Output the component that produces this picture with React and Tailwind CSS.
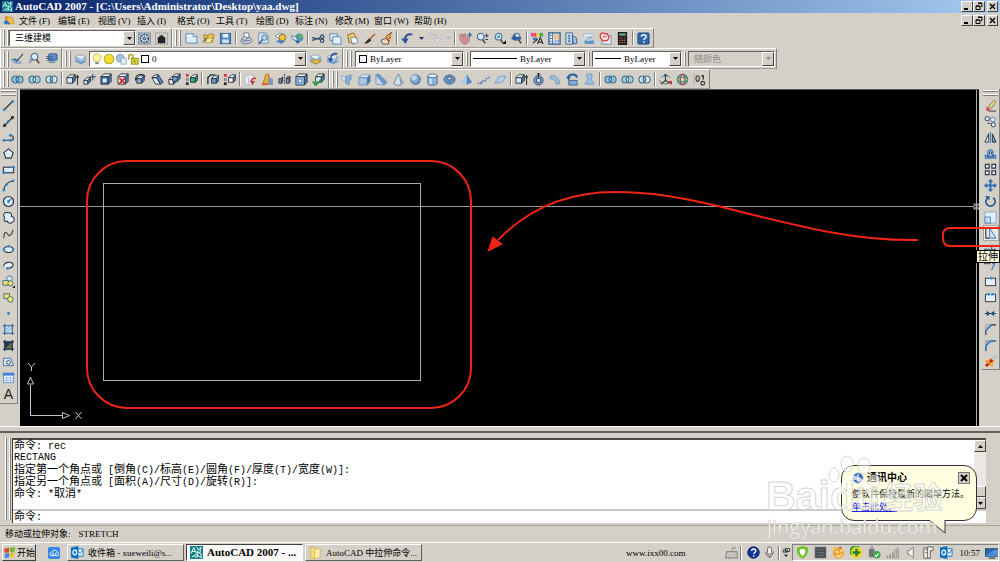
import React from 'react';

const BLUE = '#3a78b8';
const DARK = '#2b3440';

// solid box used by most of the 3D toolbar icons
const Cube = ({ front = '#8fb4dc', x = 2, y = 5, s = 7 }) => (
  <g stroke={DARK} strokeWidth="1" strokeLinejoin="round">
    <path d={`M${x} ${y}l3 -3h${s}l-3 3z`} fill="#eef5fc" />
    <path d={`M${x + s} ${y}l3 -3v${s}l-3 3z`} fill="#4b79ad" />
    <rect x={x} y={y} width={s} height={s} fill={front} />
  </g>
);

const Rings = ({ mid, side }) => (
  <g stroke="#3f7390" strokeWidth="1.2">
    <circle cx="4.7" cy="7" r="3.7" fill={side} />
    <circle cx="9.3" cy="7" r="3.7" fill={side} />
    <path d="M7 4.1a3.7 3.7 0 0 1 0 5.8a3.7 3.7 0 0 1 0 -5.8z" fill={mid} />
  </g>
);

const Sheets = () => (
  <g stroke="#5b86b4" strokeWidth=".6">
    <path d="M1 10l5-2 7 2-5 3z" fill="#7aa3cf" />
    <path d="M1 7.5l5-2 7 2-5 3z" fill="#b9d2ea" />
    <path d="M1 5l5-2 7 2-5 3z" fill="#e8f1fa" />
  </g>
);

const Lens = ({ x = 6, y = 5 }) => (
  <g>
    <path d={`M${x + 2} ${y + 3}l3 4`} stroke="#5d4a3a" strokeWidth="1.8" />
    <circle cx={x} cy={y} r="3.6" fill="#d6e9fa" stroke="#4d6f95" strokeWidth="1.2" />
  </g>
);

const Flag = () => (
  <g>
    <path d="M0 2l6-1v5l-5 1z" fill="#e1452f" />
    <path d="M7 1l6-1-1 6-5 0z" fill="#79b928" />
    <path d="M1 8l5-1v5l-5 1z" fill="#3f86e0" />
    <path d="M7 7h5l-1 5-4 0z" fill="#f6bf22" />
  </g>
);

const Outlook = () => (
  <g>
    <path d="M6 3h7v8H6z" fill="#eaf3fb" stroke="#0f78c8" />
    <path d="M6 4l4 4 3-4" fill="none" stroke="#0f78c8" />
    <path d="M0 1.5l8-1.5v14l-8-1.5z" fill="#0f70c0" />
    <ellipse cx="4" cy="7" rx="2" ry="2.6" fill="none" stroke="#fff" strokeWidth="1.3" />
  </g>
);

const Acad = () => (
  <g>
    <rect width="14" height="14" fill="#0e7f86" />
    <path d="M1 8l3-6 3 6M2 6h4M7 1l2 3 4-2M2 12l3-2 2 3M8 12V6l4 3v3M11 1v6M6 9l7 4" fill="none" stroke="#dff6f2" strokeWidth="1.1" />
  </g>
);

const ICONS = {
  acad: <Acad />,
  doc: (
    <g>
      <path d="M4 2l7 1 2 8-8-1z" fill="#f6c436" stroke="#a9781b" strokeWidth=".7" />
      <path d="M1 8c3-4 6-1 8 4H2z" fill="#3373c4" />
      <path d="M0 12h14" stroke="#e8e4c8" strokeWidth="2" />
      <path d="M2 1l4 3-3 2z" fill="#d8852c" />
    </g>
  ),
  gear: (
    <g>
      <rect x=".5" y="1" width="13" height="12" fill="#9db3c6" stroke="#6a8196" strokeDasharray="2 1" />
      <circle cx="7" cy="7" r="4.2" fill="#d9e4ee" stroke="#37495b" strokeWidth="1.6" strokeDasharray="2 1" />
      <circle cx="7" cy="7" r="1.6" fill="#6fa0cf" stroke="#37495b" />
    </g>
  ),
  home: (
    <g>
      <rect x=".5" y="1" width="13" height="12" fill="none" stroke="#6f7a85" strokeDasharray="1 1" />
      <path d="M2 7l5-4 5 4h-1v5H3V7z" fill="#20252b" />
    </g>
  ),
  new: (
    <g>
      <path d="M1 2h8l4 3v7H1z" fill="#d9eaf8" stroke="#5283b5" />
      <path d="M9 2v3h4" fill="#fff" stroke="#5283b5" />
      <path d="M2 4h5" stroke="#fff" strokeWidth="2" />
    </g>
  ),
  open: (
    <g>
      <path d="M2 3l5 1 1-2 5 1-2 8-8-2z" fill="#f0cf55" stroke="#8a6a17" strokeWidth=".8" />
      <path d="M6 7l6-1-3 6-6-1z" fill="#fbe99d" stroke="#8a6a17" strokeWidth=".6" />
      <path d="M1 11l5-6" stroke="#34404c" />
    </g>
  ),
  save: (
    <g>
      <rect x="1.5" y="1.5" width="11" height="11" fill="#4f8ac8" stroke="#2b5e99" />
      <rect x="4" y="2" width="6" height="4" fill="#eaf2fa" />
      <rect x="3.5" y="8" width="7" height="4" fill="#cfe1f2" />
    </g>
  ),
  print: (
    <g stroke="#5b6b86" strokeWidth=".9">
      <path d="M4 1h5l1 5H5z" fill="#fff" />
      <path d="M2 7l9-1 2 3-2 3-8 1-2-3z" fill="#c5cfe0" />
      <path d="M3 10l8-1" fill="none" />
      <circle cx="5" cy="7" r="2" fill="#dfe7f3" />
    </g>
  ),
  preview: (
    <g>
      <path d="M2 1h8l2 3v8H2z" fill="#e7f1fa" stroke="#5c88b7" />
      <circle cx="8" cy="6" r="3" fill="#b8d6f1" stroke="#3d6894" />
      <path d="M6 8l-4 5" stroke="#3d6894" strokeWidth="1.7" />
    </g>
  ),
  publish: (
    <g>
      <path d="M1 4l6-3 5 3-5 4z" fill="#e3edf7" stroke="#6a87a8" strokeWidth=".8" />
      <circle cx="9" cy="6" r="3.6" fill="#eec43e" stroke="#8a6a17" />
      <path d="M2 10l5-2 5 2-4 3z" fill="#5384bd" />
    </g>
  ),
  globe: (
    <g>
      <circle cx="9" cy="6" r="4.3" fill="#4a94d4" />
      <path d="M7 4l4-2 2 4-4 2z" fill="#67b04f" />
      <path d="M0 4l5 1 3 5-6-2z" fill="#dfe9f3" stroke="#4b6e92" strokeWidth=".8" />
      <path d="M4 9l6 1-3 3z" fill="#2d5f9e" />
    </g>
  ),
  cut: (
    <g fill="none" stroke="#33496a" strokeWidth="1.3">
      <path d="M0 6l9 2M0 9l9-3" />
      <circle cx="11" cy="5" r="1.8" />
      <circle cx="11" cy="9.5" r="1.8" />
    </g>
  ),
  copy: (
    <g fill="#e3effa" stroke="#4c84bb">
      <path d="M1 2h8v7H1z" />
      <path d="M4 5h7l2 2v6H4z" />
    </g>
  ),
  paste: (
    <g>
      <path d="M2 3l6-2 4 6-3 6-6-2z" fill="#e6c865" stroke="#8b6d22" />
      <path d="M5 6h6l2 5-6 2z" fill="#f3f7fb" stroke="#5a83ad" strokeWidth=".8" />
    </g>
  ),
  brush: (
    <g>
      <path d="M13 2L7 8" stroke="#b5793b" strokeWidth="2" />
      <path d="M7 7l2 2c-2 3-5 4-8 3 3-1 3-4 6-5z" fill="#3a2f28" />
    </g>
  ),
  bolt: (
    <g>
      <path d="M13 0L6 5l2 1-5 5 9-5-2-1z" fill="#f6bb28" stroke="#8a3d10" strokeWidth=".8" />
      <path d="M1 9l5-2 4 2-1 4-6 0z" fill="#e6d9c8" stroke="#5a4636" strokeWidth=".9" />
      <path d="M8 8l2 2" stroke="#d2402a" strokeWidth="2" />
    </g>
  ),
  undo: (
    <g>
      <path d="M12 3C8 1 4 4 4 9" fill="none" stroke="#2c5490" strokeWidth="2.2" />
      <path d="M0 7h8l-3 6z" fill="#2c5490" />
    </g>
  ),
  redo: (
    <g>
      <path d="M2 3c4-2 8 1 8 6" fill="none" stroke="#bcc2c8" strokeWidth="2" />
      <path d="M6 7h8l-4 6z" fill="#d8dde2" stroke="#b2b8be" strokeWidth=".7" />
    </g>
  ),
  pan: (
    <g>
      <path d="M1 3l2-1 2 3V2h2l1 4 3-1 0 5-3 3H5L1 9z" fill="#cf8f92" stroke="#a56a70" strokeWidth=".7" />
      <path d="M9 3h5M11.500 .500v5" stroke="#3a6898" strokeWidth="1.4" />
    </g>
  ),
  zoomrt: (<g><Lens x={5} y={5} /><path d="M9.500 4h4M11.500 2v4M10 8h3" stroke="#25405e" strokeWidth="1.1" /></g>),
  zoomwin: (<g><Lens x={6} y={5} /><rect x="4.500" y="3.500" width="3" height="3" fill="#5d93c9" /><path d="M10 13h4V9z" fill="#111" /></g>),
  zoomprev: (<g><Lens x={7} y={5} /><path d="M1 7l5-5v3h6v3H6v2z" fill="#2f5f98" /></g>),
  props: (
    <g>
      <path d="M0 1h3v4H0z" fill="#e242c9" /><path d="M3 1h3v4H3z" fill="#f04a3a" /><path d="M6 1h3v4H6z" fill="#f5d731" /><path d="M9 1h4v4H9z" fill="#35b54a" />
      <path d="M2 6h5v3H2z" fill="#4d78b1" />
      <path d="M7 13l3-7 3 7M8 11h4M2 12l5-4" stroke="#222" fill="none" strokeWidth="1.1" />
    </g>
  ),
  center: (
    <g>
      <rect x="1" y="1" width="12" height="12" fill="#e8f1fa" stroke="#315d90" strokeWidth="1.4" />
      <path d="M5 1v12" stroke="#315d90" />
      <path d="M7 3h2v2H7zM10 3h2v2h-2zM7 6h2v2H7zM10 6h2v2h-2z" fill="#e09b32" />
      <path d="M2 4h2M2 7h2M2 10h2" stroke="#315d90" />
      <path d="M7 9h2v2H7zM10 9h2v2h-2z" fill="#5b8ec6" />
    </g>
  ),
  palette: (
    <g>
      <path d="M1 1h7v12H1z" fill="#e1edf8" stroke="#315d90" />
      <path d="M3 3h3v2H3zM3 6h3v2H3zM3 9h3v2H3z" fill="#4a7fba" />
      <path d="M8 4l4 2 1 6-4 1z" fill="#a9c6e4" stroke="#315d90" />
    </g>
  ),
  sheet: (
    <g>
      <path d="M1 2h11l1 3-11 1z" fill="#dce9f5" stroke="#89a7c6" strokeWidth=".6" />
      <path d="M2 7l10-2-8 5 9-1v4H3z" fill="#5f9bc8" />
      <path d="M1 5l8 2-8 3z" fill="#c7d9ea" />
    </g>
  ),
  markup: (
    <g>
      <rect x="3" y="4" width="10" height="9" fill="#e9eff6" stroke="#7790ad" />
      <path d="M2 2q2-2 4 0q3-1 3 1q3 2 1 4q0 3-3 2q-3 2-4-1q-3-2-1-6z" fill="#fbe4e4" stroke="#d8343a" strokeWidth="1.300" />
      <path d="M4 5h4" stroke="#d8343a" />
    </g>
  ),
  calc: (
    <g>
      <rect x="2" y="0" width="10" height="14" fill="#1d1d1f" />
      <rect x="3.500" y="1.500" width="7" height="2.500" fill="#63b27b" />
      <path d="M3.500 6.500h7M3.500 9h7M3.500 11.500h7" stroke="#bf5c51" strokeWidth="1.200" strokeDasharray="1.500 1" />
    </g>
  ),
  help: (
    <g>
      <rect x="1" y="1" width="12" height="12" rx="1" fill="#2d66a8" stroke="#1b4478" />
      <path d="M4.800 5.200c0-3 5-3 5 0c0 1.800-2.500 1.600-2.500 3.500M7.300 10v1.600" stroke="#fff" fill="none" strokeWidth="1.500" />
    </g>
  ),
  lay1: (<g><path d="M0 8l7 0 4 4H4z" fill="#a6c6e6" stroke="#4f7fb0" strokeWidth=".7" /><path d="M13 2L6 10l-3-3" stroke="#2f567f" fill="none" strokeWidth="1.300" /></g>),
  lay2: (<g><Lens x={7} y={5} /><path d="M1 12l5-4M1 9l4-2" stroke="#6d87a5" strokeWidth="1.200" /></g>),
  lay3: (<g><rect x="4" y="2" width="9" height="7" rx="1" fill="#5d8ec4" stroke="#315d90" /><path d="M1 5h7M1 7h7M2 9h7M4 11h7" stroke="#2e5f94" /></g>),
  layers: <Sheets />,
  layprev: (<g><Sheets /><path d="M4 8l9 1-4 4-6-2z" fill="#e8bb3c" stroke="#9a7420" strokeWidth=".700" /></g>),
  layundo: (<g><Sheets /><path d="M12 2C7 1 5 4 5 8" fill="none" stroke="#2c5490" strokeWidth="1.800" /><path d="M2 7h6l-3 4z" fill="#2c5490" /></g>),
  bulb: (<g><path d="M4 9C1 5 3 1 7 1s6 4 3 8v1H4z" fill="#fdf6a3" stroke="#b9a533" strokeWidth=".8" /><path d="M5 11h4v2H5z" fill="#5b7fa8" /></g>),
  sun: <circle cx="7" cy="7" r="5.500" fill="#f4e02c" stroke="#b4a51b" strokeWidth="1.200" />,
  freeze: (<g><circle cx="6" cy="6" r="4.500" fill="#a8c3dd" stroke="#7796b4" /><rect x="7" y="6" width="6" height="7" fill="#e8eff6" stroke="#8da3ba" /></g>),
  lock: (<g><path d="M2 8V4c0-3 5-3 5 0v3" fill="none" stroke="#a99a20" strokeWidth="1.600" /><rect x="5" y="6" width="8" height="7" fill="#d9d23b" stroke="#8c8218" /><path d="M9 8v3" stroke="#6a6210" /></g>),
  union: <Rings mid="#8fc3da" side="#8fc3da" />,
  subtract: <Rings mid="#f0f4f6" side="#a9cddd" />,
  intersect: <Rings mid="#8fc3da" side="#e2e6e6" />,
  extrude: (<g><Cube x={1} y={5} s={6} front="#dbe7f2" /><path d="M12.500 13V4" stroke="#222" /><path d="M10.500 5l2-3.500 1.500 3.500z" fill="#222" /></g>),
  movef: (<g><Cube x={1} y={8} s={4} front="#dbe7f2" /><path d="M7 4h7M10.500 1v7" stroke="#2f4f7a" strokeWidth="1.200" /></g>),
  offsetf: (<g><Cube x={1} y={4} s={8} front="#3f74b4" /><rect x="3" y="6" width="4" height="4" fill="#e8f1fa" /></g>),
  deletef: (<g><Cube x={1} y={4} s={8} front="#f0f3f6" /><path d="M2.500 5.500l6 6M8.500 5.500l-6 6" stroke="#d3242b" strokeWidth="1.800" /></g>),
  rotatef: (<g><Cube x={3} y={6} s={5} front="#89aed6" /><path d="M2 6c0-5 8-6 10-2" fill="none" stroke={DARK} strokeWidth="1.200" /><path d="M1 5l3 1-3 3z" fill={DARK} /></g>),
  taper: (<g stroke={DARK}><path d="M1 5l3-3h4l-2 3zM1 5h5l4 7H5z" fill="#dfe9f3" /><path d="M8 2l5 8-3 2-4-7z" fill="#5c87b8" /></g>),
  copyf: (<g><Cube x={1} y={7} s={5} front="#dbe7f2" /><Cube x={5} y={4} s={5} front="#6f9ccb" /></g>),
  colorf: (<g><Cube x={6} y={5} s={5} front="#35b566" /><path d="M1 1h3v3H1z" fill="#d8343a" /><path d="M1 5.500h3v3H1z" fill="#888" /><path d="M1 10h3v3H1z" fill="#333" /></g>),
  copye: (<g><Cube x={6} y={6} s={5} front="#6f9ccb" /><path d="M2 12V5l3-3h5" fill="none" stroke={DARK} strokeWidth="1.500" /></g>),
  colore: (<g><Cube x={6} y={5} s={5} front="#f1f3f5" /><path d="M1 1h3v3H1z" fill="#d8343a" /><path d="M1 5.500h3v3H1z" fill="#888" /><path d="M1 10h3v3H1z" fill="#333" /></g>),
  imprint: (<g><path d="M1 4l4-2 5 1v8l-5 2-4-2z" fill="#e6edf5" stroke="#a9bacb" strokeWidth=".8" /><path d="M5 5v8" stroke="#a9bacb" /><path d="M13 6c-3-1-5 0-5 3" fill="none" stroke="#c9343a" strokeWidth="1.5" /><path d="M6 8l3 5 3-4z" fill="#c9343a" /></g>),
  clean: (<g><path d="M5 2l3-1 4 11H2z" fill="#efa93a" stroke="#a0661c" strokeWidth=".8" /><path d="M8 4l5 3v6H7z" fill="#8a97a6" /><path d="M1 12h6" stroke="#d85b28" strokeWidth="2" /></g>),
  separate: (<g fill="#7d9cc0" stroke={DARK}><path d="M1 6h3v5H1zM4 6l1-2v5l-1 2M9 6h3v5H9zM9 6l1-2h3l-1 2M13 4v5l-1 2" /><path d="M7 1v12" strokeDasharray="2 1" /></g>),
  shell: (<g><Cube x={1} y={4} s={9} front="#a9c9e8" /><rect x="3.500" y="6.500" width="4" height="4" fill="#eef5fb" stroke={BLUE} /></g>),
  check: (<g><Cube x={4} y={4} s={6} front="#dfeaf5" /><path d="M1 9l3 4 6-6" fill="none" stroke="#239a3f" strokeWidth="2" /></g>),
  polysolid: (<g stroke="#6e95c0" strokeWidth=".7"><path d="M1 3l4 1v5L1 7z" fill="#dcebf8" /><path d="M5 4l6-2v5l-2 1v5l-4-2z" fill="#86add8" /></g>),
  box: (<g stroke="#5580ad" strokeWidth=".7"><path d="M1 5l4-3h8l-3 3z" fill="#e3effa" /><path d="M1 5h9v8H1z" fill="#a7c5e5" /><path d="M10 5l3-3v7l-3 4z" fill="#4773a6" /></g>),
  wedge: (<g stroke="#5580ad" strokeWidth=".7"><path d="M1 2l3-1 9 9-3 3z" fill="#7299c5" /><path d="M1 2v10l9 1z" fill="#c3d9ee" /></g>),
  cone: (<g><path d="M7 1l5 10c-1 3-9 3-10 0z" fill="#d3e1ef" stroke="#6a7f96" /><path d="M8 4l3 7-2 1z" fill="#7f9bb8" /></g>),
  sphere: (<g><circle cx="7" cy="7" r="5.800" fill="#5f86b6" /><circle cx="6.3" cy="6.2" r="4.600" fill="#86a8d0" /><circle cx="5.500" cy="5.200" r="2.800" fill="#c3d7ec" /></g>),
  cylinder: (<g stroke="#4d6f95"><path d="M2 3v8c0 3 10 3 10 0V3z" fill="#8eb2d9" /><ellipse cx="7" cy="3" rx="5" ry="2" fill="#eaf2fa" /><path d="M5 6v6" stroke="#dce9f6" strokeWidth="2" /></g>),
  torus: (<g><ellipse cx="7" cy="7" rx="6" ry="5" fill="#6690c0" stroke="#456b98" /><ellipse cx="7" cy="6" rx="2.600" ry="1.600" fill="#d9d6cf" stroke="#39597f" /></g>),
  pyramid: (<g><path d="M7 1l6 9-6 3z" fill="#5486be" /><path d="M7 1L1 10l6 3z" fill="#a9cbec" /></g>),
  helix: <path d="M1 12c2-5 4 3 4-2s4 2 4-2 4 0 4-4" fill="none" stroke="#5e84ad" strokeWidth="1.600" strokeDasharray="2 1" />,
  plane: <path d="M1 11l4-7 8-1-4 7z" fill="#b4d0eb" stroke="#7a9fc6" />,
  presspull: (<g><circle cx="7" cy="8" r="5" fill="#7a9cc0" stroke="#385474" /><rect x="5" y="6" width="4" height="4" fill="#dfeaf5" stroke="#385474" /><path d="M7 0v5M5 2l2-2 2 2" stroke="#222" fill="none" /></g>),
  sweep: <path d="M2 3c5-1 8 2 10 8l-4 1C7 8 5 6 1 6z" fill="#9dbfe2" stroke="#6c91b8" />,
  revolve: (<g><path d="M3 8h9v5H3z" fill="#86add8" stroke="#44698f" /><path d="M2 5c2-5 9-4 10 0" fill="none" stroke="#2d5f9e" strokeWidth="2" /><path d="M0 4h5l-2 4z" fill="#2d5f9e" /></g>),
  loft: <path d="M4 1h6L9 7l3 5H2l3-5z" fill="#9dbfe2" stroke="#7a9fc6" />,
  ucs: (<g fill="none"><path d="M7 2v6l-5 4M7 8l5 3" stroke="#333" strokeWidth="1.200" /><path d="M2 5c2-3 8-3 10 0M1 8c0 5 12 5 12 0" stroke="#45715c" /><circle cx="7" cy="2.500" r="1.500" fill="#1f4f9c" /><path d="M10 9h4v4z" fill="#d1262c" /></g>),
  orbit: (<g fill="none"><circle cx="7" cy="7" r="5.500" stroke="#2f6ea5" strokeWidth="1.200" /><ellipse cx="7" cy="7" rx="2.500" ry="5.500" stroke="#c4333a" strokeWidth="1.300" /><ellipse cx="7" cy="7" rx="5.500" ry="2.500" stroke="#3a9a58" strokeWidth="1.300" /></g>),
  walk: (<g fill="none" stroke="#333"><path d="M3 1L1 3v10" stroke="#aaa" /><ellipse cx="5" cy="6" rx="1.800" ry="3" strokeWidth="1.200" /><circle cx="10.500" cy="11" r="2" strokeWidth="1.200" /><path d="M9 3h2v4" strokeWidth="1.500" /></g>),
  // draw
  line: (<g><path d="M3 11L11 3" stroke={DARK} strokeWidth="1.300" /><circle cx="2.500" cy="11.500" r="1.500" fill="#2783d8" /><circle cx="11.500" cy="2.500" r="1.500" fill="#2783d8" /></g>),
  xline: (<g><path d="M2 12L12 2" stroke="#222" strokeWidth="1.300" /><path d="M1 13l1-4 3 3zM13 1l-1 4-3-3z" fill="#222" /><circle cx="7" cy="7" r="1.500" fill="#2783d8" /></g>),
  pline: (<g><path d="M2 10h8c3 0 3-5 0-5H8" fill="none" stroke={DARK} strokeWidth="1.200" /><circle cx="2" cy="10" r="1.500" fill="#2783d8" /><circle cx="9" cy="10" r="1.500" fill="#2783d8" /><circle cx="9" cy="4.500" r="1.500" fill="#2783d8" /></g>),
  polygon: <path d="M7 2l5 4-2 6H4L2 6z" fill="#dcebf8" stroke={DARK} strokeWidth="1.200" />,
  rect: (<g><rect x="1.500" y="4.500" width="11" height="6" fill="#dcebf8" stroke={DARK} strokeWidth="1.200" /><circle cx="1.800" cy="10.500" r="1.500" fill="#2783d8" /><circle cx="12.200" cy="4.500" r="1.500" fill="#2783d8" /></g>),
  arc: (<g><path d="M2 12C2 7 6 3 12 2" fill="none" stroke={DARK} strokeWidth="1.100" /><circle cx="2" cy="12" r="1.400" fill="#2783d8" /><circle cx="5" cy="6" r="1.400" fill="#2783d8" /><circle cx="12" cy="2" r="1.400" fill="#2783d8" /></g>),
  circle: (<g><circle cx="7" cy="7" r="5.400" fill="#e3effa" stroke={DARK} strokeWidth="1.300" /><path d="M7 7l3-3" stroke="#2783d8" strokeWidth="1.400" /><circle cx="7" cy="7" r="1.600" fill="#2783d8" /></g>),
  cloud: <path d="M3 7C0 4 3 0 6 2c3-1 5 1 4 4 4 0 4 5 1 6-2 2-5 1-5-1C3 12 1 9 3 7z" fill="#e3effa" stroke={DARK} strokeWidth="1.100" />,
  spline: <path d="M2 12C2 2 6 7 7 9s4-2 5-6" fill="none" stroke="#444" strokeWidth="1.200" />,
  ellipse: (<g><ellipse cx="7" cy="7" rx="5" ry="3.300" fill="#e3effa" stroke={DARK} strokeWidth="1.200" /><circle cx="2" cy="7" r="1.400" fill="#2783d8" /><circle cx="12" cy="7" r="1.400" fill="#2783d8" /><circle cx="7" cy="3.500" r="1.400" fill="#2783d8" /></g>),
  earc: (<g><path d="M2 8C1 3 11 2 12 6c0 3-3 4-6 4" fill="#e3effa" stroke={DARK} strokeWidth="1.200" /><circle cx="6" cy="10" r="1.500" fill="#2783d8" /></g>),
  insert: (<g><circle cx="8" cy="4" r="3" fill="#d9e8f6" stroke={BLUE} /><path d="M1 6h6v5H1z" fill="#f1e56d" stroke="#3a6d8c" /><circle cx="9" cy="9" r="2.800" fill="#f1e56d" stroke="#3a6d8c" /><path d="M11 14h3v-3z" fill="#111" /></g>),
  block: (<g><path d="M2 3h6v5H2z" fill="#f1e56d" stroke="#3a6d8c" /><circle cx="9" cy="9" r="3" fill="#f1e56d" stroke="#3a6d8c" /></g>),
  point: <circle cx="7" cy="7" r="1.600" fill="#2783d8" />,
  hatch: (<g><rect x="3" y="3" width="8" height="8" fill="#cfe1f3" /><path d="M1 3h12M1 11h12M3 1v12M11 1v12" stroke="#2c6295" strokeWidth="1.200" /><path d="M4 8l4-4M5 10l5-5" stroke="#6f9ccb" /></g>),
  gradient: (<g><rect x="3" y="3" width="8" height="8" fill="#2b3b52" /><path d="M11 3v8H3z" fill="#6b7347" /><path d="M1 3h12M1 11h12M3 1v12M11 1v12" stroke="#1d3350" strokeWidth="1.300" /></g>),
  region: (<g><path d="M1.500 3.500h8l3 8h-11z" fill="#d5e6f5" stroke="#3f74a8" /><circle cx="7" cy="8" r="2" fill="#fff" stroke={DARK} /></g>),
  table: (<g><rect x="1.500" y="2.500" width="11" height="10" fill="#fff" stroke="#5d93d6" /><path d="M1 2h12v3H1z" fill="#3f7fd6" /><path d="M2 7.500h10M2 10h10M5 5v7M9 5v7" stroke="#8eb6ea" /></g>),
  // modify
  erase: (<g><path d="M5 8l6-7 2 2-5 7z" fill="#f1d87a" stroke="#555" strokeWidth=".7" /><path d="M3 8l4 3-2 2-3-1z" fill="#dd4b41" /><path d="M5 13h8" stroke="#333" /></g>),
  copym: (<g fill="#e3effa" stroke={DARK}><circle cx="3.500" cy="4" r="2.300" /><circle cx="9.500" cy="5" r="2.500" stroke={BLUE} /><circle cx="10" cy="10.500" r="2.300" /><path d="M4 9h3" /></g>),
  mirror: (<g><path d="M5 3v9H1z" fill="#e3effa" stroke={DARK} /><path d="M9 3v9h4z" fill="#6f9ccb" stroke={DARK} /><path d="M7 1v12" stroke={BLUE} /></g>),
  offset: (<g><path d="M1.500 12V9H5C1 1 13 1 9 9h3.500v3z" fill="#a9cbec" stroke={BLUE} strokeWidth="1.400" /><path d="M3 10.500h8M6 8c-1-4 3-4 2 0" fill="none" stroke={DARK} /></g>),
  array: <path d="M1.500 1.500h4v4h-4zM8.500 1.500h4v4h-4zM1.500 8.500h4v4h-4zM8.500 8.500h4v4h-4z" fill="#e3effa" stroke={DARK} strokeWidth="1.200" />,
  move: <path d="M7 0l3 3H8v3h3V4l3 3-3 3V8H8v3h2l-3 3-3-3h2V8H3v2L0 7l3-3v2h3V3H4z" fill="#2f6cb0" />,
  rotate: (<g><path d="M4 3a5 5 0 1 0 6 0" fill="none" stroke="#2c5f97" strokeWidth="1.900" /><path d="M1 1h5v5z" fill="#2c5f97" /></g>),
  scale: (<g><rect x="1" y="1" width="12" height="12" fill="#e3effa" stroke="#87a9cc" /><rect x="1" y="6.500" width="6" height="6.500" fill="#c5dbf0" stroke="#5b87b5" /></g>),
  stretch: (<g><path d="M6 1H2v11h4" fill="none" stroke={DARK} strokeWidth="1.200" /><path d="M6 1l7 11H6z" fill="#cfe1f3" stroke={BLUE} /></g>),
  trim: <path d="M0 7h6M8 7h5M9 2L6 12" stroke="#4b6e92" strokeWidth="1.400" />,
  extend: (<g><path d="M0 5h7M9 5h2" stroke="#666" strokeWidth="1.200" /><path d="M13 2L8 12" stroke={BLUE} strokeWidth="1.200" /></g>),
  breakp: (<g><rect x="1.500" y="3.500" width="11" height="8" fill="#e3effa" stroke={DARK} /><circle cx="8" cy="3.500" r="1.400" fill="#2783d8" /></g>),
  break: (<g><path d="M5 3.500H1.500v8h11v-8H9" fill="#e3effa" stroke={DARK} /><circle cx="5" cy="3.500" r="1.400" fill="#2783d8" /><circle cx="9" cy="3.500" r="1.400" fill="#2783d8" /></g>),
  join: (<g><path d="M1 7h12" stroke="#333" /><path d="M3 4l4 3-4 3zM11 4L7 7l4 3z" fill="#1d4c7c" /></g>),
  chamfer: (<g fill="none"><path d="M2 13V8l6-6h5" stroke={DARK} strokeWidth="1.200" /><path d="M2 8l6-6" stroke="#2783d8" strokeWidth="1.600" /><path d="M2 7V2h5" stroke="#999" /></g>),
  fillet: (<g fill="none"><path d="M2 13V2h11" stroke="#888" /><path d="M2 13V11c0-6 4-9 9-9h2" stroke={DARK} /><path d="M2 11c0-6 4-9 9-9" stroke="#2783d8" strokeWidth="1.700" /></g>),
  explode: (<g><path d="M1 6l4 0 1-3 3 3 3 0-3 3 1 4-4-2-4 2 1-4z" fill="#ef8a2a" /><path d="M2 12l7-7" stroke="#c3211b" strokeWidth="2.400" /><path d="M4 7l2 2M7 9l2 2" stroke="#f6d13a" strokeWidth="1.800" /><path d="M10 1l3 3M12 1l1 1M8 2l1 1" stroke="#7ea7d3" /></g>),
  // taskbar
  flag: <Flag />,
  cloudapp: (<g><rect width="14" height="14" rx="2" fill="#3288e6" /><path d="M3 10c-2-3 1-4 2-4 1-4 6-2 5 0 3 0 3 4 1 4z" fill="none" stroke="#fff" strokeWidth="1.100" /><circle cx="6" cy="8" r="1" fill="#fff" /><circle cx="9" cy="8" r="1" fill="#fff" /></g>),
  outlook: <Outlook />,
  folder: (<g><path d="M2 1l5 1v11l-5 1z" fill="#f5dc7c" stroke="#cfa63b" strokeWidth=".7" /><path d="M6 4l6-2v10l-6 2z" fill="#fbeeb0" stroke="#cfa63b" strokeWidth=".7" /></g>),
  keyboard: (<g><path d="M8 5V2h4" stroke="#888" fill="none" /><path d="M2 6h11l1 7H0z" fill="#b9b6af" stroke="#85827c" /><path d="M3 8h8M2 10.500h10" stroke="#eceae5" strokeDasharray="1.500 1" /></g>),
  qmark: (<g><circle cx="7" cy="7" r="6.200" fill="#15349b" stroke="#0b1f66" /><path d="M5 5.500c0-3 4.500-3 4.500 0C9.500 7 7.300 7 7.300 8.500M7.300 10v1.500" stroke="#fff" fill="none" strokeWidth="1.400" /></g>),
  mic: (<g fill="none" stroke="#555"><rect x="5" y="1" width="4" height="8" rx="2" fill="#fff" /><path d="M3 6c0 7 8 7 8 0M7 11v2" /></g>),
  restore: (<g><path d="M6 1.500h6v4H6zM3 3.500h6v3H3z" fill="#eee" stroke="#222" strokeWidth="1.200" /><path d="M4 10h6l-3 3z" fill="#111" /></g>),
  shield: (<g><path d="M7 0l6 2c0 6-1 9-6 12C2 11 1 8 1 2z" fill="#6fc02c" /><path d="M7 3l3 1c0 4-1 5-3 7-2-2-3-3-3-7z" fill="#fff" /></g>),
  chip: (<g><rect x="1" y="1" width="12" height="12" fill="#4a4f54" stroke="#85898d" strokeDasharray="1 1" /><path d="M3 4h8M3 7h8M3 10h8" stroke="#6f757b" /></g>),
  pal: (<g><circle cx="7" cy="7.500" r="6" fill="#f4a436" /><path d="M4 6l3 1M9 4l2 2M5 10c2 2 4 1 5-1" fill="none" stroke="#fde6b0" strokeWidth="1.800" /><circle cx="3" cy="3" r="1.800" fill="#e9c22c" /><circle cx="9" cy="2" r="1.500" fill="#d65e43" /></g>),
  plus: (<g><circle cx="7" cy="7" r="6.500" fill="#f0d52c" /><path d="M1 9a6.500 6.500 0 0 1 9-8.500" fill="none" stroke="#2c9c38" strokeWidth="2" /><path d="M7 3v8M3 7h8" stroke="#237e2c" strokeWidth="2.600" /></g>),
  usb: (<g><rect x="1" y="3" width="6" height="9" rx="1" fill="#6d7278" /><path d="M2 0h4v3H2z" fill="#a5a9ad" /><circle cx="9.500" cy="9.500" r="4" fill="#39a844" /><path d="M7.500 9.500l1.500 2 2.500-3.500" fill="none" stroke="#fff" strokeWidth="1.200" /></g>),
  signal: <path d="M1 11h1v2H1zM4 9h1v4H4zM7 7h1v6H7zM9.500 4h1.500v9H9.500zM12 2h1.500v11H12z" fill="#eee" stroke="#7c7a76" strokeWidth=".7" />,
  speaker: <path d="M4 5h2l4-4v12L6 9H4z" fill="#f6f5f2" stroke="#7c7a76" />,
  clip: (<g fill="#efeeea" stroke="#66645f"><rect x="2" y="2" width="6" height="11" /><path d="M6 1h6v4H9v8H6z" /><path d="M4 4h2M4 7h2" /></g>),
  display: (<g><path d="M0 3h14v8H0z" fill="#2b67b0" stroke="#173f74" /><path d="M0 11L10 4h4v7z" fill="#4f8ed6" /><path d="M4 13h7" stroke="#555" strokeWidth="1.500" /></g>),
  info: (<g><circle cx="7" cy="7" r="6.200" fill="#3665b8" stroke="#cfdaf0" /><path d="M7 3v2M7 6v5" stroke="#fff" strokeWidth="2" /></g>),
};

const Icon = ({ name, size = 'w-[13px] h-[13px]' }) => (
  <svg viewBox="0 0 14 14" className={`${size} shrink-0`} aria-hidden="true">{ICONS[name]}</svg>
);

const Grip = () => (
  <span className="flex gap-[2px] w-[6px] h-[16px] shrink-0">
    <span className="w-[2px] bg-white border-r border-[#808080]" />
    <span className="w-[2px] bg-white border-r border-[#808080]" />
  </span>
);

const Sep = () => <span className="w-[2px] h-[14px] mx-px shrink-0 bg-white border-l border-[#808080]" />;

const Tools = ({ names }) => names.split(' ').map((n, i) => {
  if (n === '|') return <Sep key={i} />;
  if (n === 'v' || n === 'w') {
    return (
      <button key={i} aria-label="more" className="w-[10px] h-4 flex items-center justify-center">
        <svg viewBox="0 0 5 3" className="w-[5px] h-[3px]"><path d="M0 0h5L2.500 3z" fill={n === 'v' ? '#21307a' : '#b4b8c0'} /></svg>
      </button>
    );
  }
  return (
    <button key={i} aria-label={n} className="w-[17px] h-4 shrink-0 flex items-center justify-center"><Icon name={n} /></button>
  );
});

const Panel = ({ children }) => (
  <div className="flex items-center pl-[2px] pr-px border-t border-l border-t-white border-l-white border-r border-b border-r-[#808080] border-b-[#a09d96]">
    {children}
  </div>
);

const raised = 'bg-[#d4d0c8] border border-t-white border-l-white border-r-[#404040] border-b-[#404040]';

const Arrow = ({ color = '#000', up }) => (
  <svg viewBox="0 0 5 3" className="w-[5px] h-[3px]"><path d={up ? 'M0 3h5L2.500 0z' : 'M0 0h5L2.500 3z'} fill={color} /></svg>
);

const Drop = ({ label, value, width, children, disabled, pad = 'pl-[5px]' }) => (
  <div className={`${width} h-[16px] flex items-stretch border border-t-[#606060] border-l-[#606060] border-r-white border-b-white text-[9px] ${disabled ? 'bg-[#d4d0c8] text-[#8c8984]' : 'bg-white text-black'}`}>
    <div className={`flex flex-1 min-w-0 items-center ${pad}`}>
      {children}
      <select aria-label={label} disabled={disabled} className="appearance-none bg-transparent flex-1 min-w-0 leading-[14px] outline-none">
        <option>{value}</option>
      </select>
    </div>
    <span className={`${raised} w-[12px] flex items-center justify-center`}><Arrow color={disabled ? '#8c8984' : '#000'} /></span>
  </div>
);

const Divider = () => <span className="w-[2px] h-[14px] mx-[2px] shrink-0 bg-white border-r border-[#808080]" />;

const WinButtons = () => (
  <div className="flex ml-auto mr-[2px]">
    <button aria-label="Minimize" className={`${raised} w-[12px] h-[11px]`}><svg viewBox="0 0 10 9"><path d="M2 6h4v2H2z" /></svg></button>
    <button aria-label="Restore" className={`${raised} w-[12px] h-[11px] mr-[2px]`}>
      <svg viewBox="0 0 10 9"><path d="M4 1.500h4v3H7M2 4h4v3.500H2zM4 1h4M2 4h4" fill="none" stroke="#000" /></svg>
    </button>
    <button aria-label="Close" className={`${raised} w-[11px] h-[11px]`}><svg viewBox="0 0 9 9"><path d="M2 2l5 5M7 2L2 7" stroke="#000" strokeWidth="1.400" /></svg></button>
  </div>
);

const MENU = [
  ['文件', 'F'], ['编辑', 'E'], ['视图', 'V'], ['插入', 'I'], ['格式', 'O'], ['工具', 'T'],
  ['绘图', 'D'], ['标注', 'N'], ['修改', 'M'], ['窗口', 'W'], ['帮助', 'H'],
];

const DRAW = 'line xline pline polygon rect arc circle cloud spline ellipse earc insert block point hatch gradient region table'.split(' ');
const MODIFY = 'erase copym mirror offset array move rotate scale stretch trim extend breakp break join chamfer fillet explode'.split(' ');

const LOG = [
  '命令: rec',
  'RECTANG',
  '指定第一个角点或 [倒角(C)/标高(E)/圆角(F)/厚度(T)/宽度(W)]:',
  '指定另一个角点或 [面积(A)/尺寸(D)/旋转(R)]:',
  '命令: *取消*',
];

// Chinese runs are set a little larger than the latin ones
const Mixed = ({ text }) => text.split(/([\u4e00-\u9fff]+)/).map((part, i) => (
  i % 2 ? <span key={i} className="text-[11px]">{part}</span> : part
));

const VGrip = () => (
  <span className="flex flex-col gap-[2px] w-[15px] mt-px mb-px">
    <span className="h-[2px] bg-white border-b border-[#808080]" />
    <span className="h-[2px] bg-white border-b border-[#808080]" />
  </span>
);

const SideBar = ({ names, text }) => (
  <div className="self-start w-[18px] flex flex-col items-center bg-[#d4d0c8] border-r border-b border-[#808080]">
    <VGrip />
    {names.map((n) => (
      <button key={n} aria-label={n} className={`w-4 h-4 flex items-center justify-center ${n === 'stretch' ? 'bg-[#ece9e4] border border-[#a8a49c]' : ''}`}>
        <Icon name={n} />
      </button>
    ))}
    {text && <button aria-label="text" className="h-[18px] leading-[18px] text-[14px] font-['Liberation_Sans'] text-[#222]">A</button>}
  </div>
);

const Drawing = () => (
  <svg className="absolute inset-0 w-full h-full" fill="none" aria-label="drawing">
    <g transform="translate(-20 -90)">
      <path d="M20 206.500H974" stroke="#9a9aa0" />
      <path d="M976.500 90V426" stroke="#a8a8a8" />
      <path d="M974 204h5v5h-5zM974 204l5 5M979 204l-5 5" stroke="#c8c8c8" strokeWidth=".8" />
      <rect x="103.500" y="183.500" width="317" height="197" stroke="#a9adba" />
      <path d="M30.500 385V415.500H62M27.500 384h6l-3-7zM62.500 412.500v6l7-3z" stroke="#c4c4c4" />
      <path d="M28 363l3.500 4v4M35 363l-3.500 4M75.500 412l6 7M81.500 412l-6 7" stroke="#c4c4c4" />
    </g>
  </svg>
);

const Markup = () => (
  <svg className="absolute inset-0 w-full h-full pointer-events-none" fill="none" aria-hidden="true">
    <g transform="translate(0 -89)" stroke="#ee2418" strokeWidth="2">
      <rect x="87" y="161" width="384" height="247" rx="40" />
      <path d="M918 240C850 241 790 224 722 207C680 197 650 192 615 192C570 192 530 207 498 240" />
      <path d="M489 250l4-12 8 6z" fill="#ee2418" />
      <path d="M1002 228H950q-7 0-7 7v3q0 8 7 8H1002" />
    </g>
  </svg>
);

const Balloon = () => (
  <div className="absolute right-[23px] bottom-[41px] w-[136px] h-[56px] bg-[#ffffe1] border border-[#333] rounded-[13px] pl-[10px] pt-[5px] text-[9px]">
    <div className="flex items-center h-[14px]">
      <Icon name="info" size="w-[12px] h-[12px]" />
      <b className="ml-[3px] text-[10px]">通讯中心</b>
      <button aria-label="Close" className="ml-auto mr-[6px] w-[12px] h-[12px] bg-[#d4d0c8] border border-[#777]">
        <svg viewBox="0 0 10 10"><path d="M2 2l6 6M8 2L2 8" stroke="#000" strokeWidth="2" /></svg>
      </button>
    </div>
    <p className="leading-[14px] mt-[2px] whitespace-nowrap">使软件保持最新的简单方法。</p>
    <a href="#help" className="block leading-[12px] text-[#2020e0] underline">单击此处。</a>
    <svg viewBox="0 0 18 15" className="absolute left-[86px] top-[53px] w-[18px] h-[15px]"><path d="M1 1l16 13V1" fill="#ffffe1" stroke="#333" /><path d="M2 0h14v1.500H2z" fill="#ffffe1" /></svg>
  </div>
);

const Watermark = () => (
  <svg viewBox="0 0 180 90" className="absolute right-[54px] bottom-[18px] w-[180px] h-[90px] pointer-events-none" fontWeight="700">
    <g fill="#fff" fillOpacity=".5" stroke="#c8c8c4" strokeOpacity=".75">
      <ellipse cx="68" cy="21" rx="5" ry="7" />
      <ellipse cx="81" cy="10" rx="6" ry="8" />
      <ellipse cx="98" cy="12" rx="6" ry="8" />
      <ellipse cx="108" cy="27" rx="6" ry="6" />
      <g fontFamily="'Liberation Sans'">
        <text x="0" y="56" fontSize="41">Bai</text>
        <text x="64" y="56" fontSize="41">du</text>
      </g>
      <text x="117" y="54" fontSize="30" fontFamily="'Noto Sans CJK SC'">经验</text>
    </g>
    <path d="M74 40C76 26 84 22 90 24c9 2 9 12 15 16" fill="none" stroke="#fff" strokeOpacity=".7" strokeWidth="4" />
    <text x="1" y="80" fontFamily="'Open Sans'" fontWeight="400" fontSize="20" fill="#fff" fillOpacity=".9" stroke="#bdbab4" strokeWidth=".4">jingyan.baidu.com</text>
  </svg>
);

const Task = ({ icon, active, children }) => (
  <button className={`flex items-center gap-[4px] w-[117px] h-[17px] pl-[3px] mr-[2px] text-left whitespace-nowrap border ${active ? 'bg-[#fbfaf8] border-t-[#404040] border-l-[#404040] border-r-white border-b-white font-bold' : 'border-t-white border-l-white border-r-[#606060] border-b-[#606060]'}`}>
    <Icon name={icon} />
    <span>{children}</span>
  </button>
);

const App = () => (
  <div className="relative min-h-screen flex flex-col overflow-hidden bg-[#d4d0c8] text-black text-[9px] leading-[12px] font-['Liberation_Serif','Noto_Sans_CJK_SC',serif]">
    <header className="flex items-center h-[13px] pl-[2px] text-white bg-linear-to-r from-[#0a246a] to-[#a6caf0]">
      <Icon name="acad" size="w-[11px] h-[11px]" />
      <h1 className="ml-[2px] text-[11px] leading-[13px] font-bold whitespace-pre">AutoCAD 2007 - [C:\Users\Administrator\Desktop\yaa.dwg]</h1>
      <WinButtons />
    </header>

    <nav className="flex items-center h-[15px] pl-[3px]">
      <Icon name="doc" size="w-[12px] h-[12px]" />
      <div className="flex ml-[4px]">
        {MENU.map(([name, key], i) => (
          <button key={key} className={`flex gap-[2px] text-left whitespace-nowrap ${i % 2 ? 'w-[40px]' : 'w-[39px]'}`}>
            <span>{name}</span><span>({key})</span>
          </button>
        ))}
      </div>
      <WinButtons />
    </nav>

    <div className="flex h-[20px]">
      <Panel>
        <Grip />
        <Drop label="Workspace" value="三维建模" width="w-[127px]" />
        <Tools names="gear home" />
      </Panel>
      <Panel>
        <Grip />
        <span className="w-[2px]" />
        <Tools names="new open save | print preview publish globe | cut copy paste brush bolt | undo v redo w | pan zoomrt zoomwin zoomprev | props center palette sheet markup calc | help" />
      </Panel>
    </div>

    <div className="flex h-[21px]">
      <Panel>
        <Grip />
        <Tools names="lay1 lay2 lay3" />
      </Panel>
      <Panel>
        <Grip />
        <span className="w-px" />
        <Tools names="layers" />
        <Drop label="Layer" value="0" width="w-[218px]" pad="pl-px">
          {['bulb', 'sun', 'freeze', 'lock'].map((n) => <Icon key={n} name={n} size="w-[12px] h-[12px]" />)}
          <span className="w-[8px] h-[8px] ml-[2px] mr-[3px] border border-black" />
        </Drop>
        <Tools names="layprev layundo" />
      </Panel>
      <Panel>
        <Grip />
        <span className="w-[3px]" />
        <Drop label="Color" value="ByLayer" width="w-[109px]" pad="pl-[3px]">
          <span className="w-[8px] h-[8px] mr-[3px] bg-[#eef2fb] border border-black" />
        </Drop>
        <Divider />
        <Drop label="Linetype" value="ByLayer" width="w-[116px]" pad="pl-[2px]">
          <span className="w-[44px] h-px mr-[3px] bg-black" />
        </Drop>
        <Divider />
        <Drop label="Lineweight" value="ByLayer" width="w-[90px]" pad="pl-[2px]">
          <span className="w-[26px] h-px mr-[3px] bg-black" />
        </Drop>
        <Divider />
        <Drop label="Plot style" value="随颜色" width="w-[87px]" disabled />
      </Panel>
    </div>

    <div className="flex h-[20px]">
      <Panel>
        <Grip />
        <Tools names="union subtract intersect | extrude movef offsetf deletef rotatef taper copyf colorf | copye colore | imprint clean separate shell check" />
      </Panel>
      <Panel>
        <Grip />
        <span className="w-px" />
        <Tools names="polysolid box wedge cone sphere cylinder torus pyramid helix plane | extrude presspull sweep revolve loft | union subtract intersect | ucs orbit walk" />
      </Panel>
    </div>

    <main className="relative flex flex-1">
      <SideBar names={DRAW} text />
      <div className="relative flex-1 ml-[2px] bg-black border-t border-[#555]">
        <Drawing />
      </div>
      <div className="w-[3px]" />
      <SideBar names={MODIFY} />
      <Markup />
      <span role="tooltip" className="absolute right-0 top-[161px] px-px h-[13px] bg-[#ffffe1] border border-black text-[10px] leading-[11px]">拉伸</span>
    </main>

    <div className="h-[7px] border-t border-b-2 border-t-white border-b-[#606060]" />

    <section className="flex h-[92px] pt-[5px] pl-[5px] pr-[14px]">
      <span className="flex gap-[2px] w-[6px] h-[82px] mr-px">
        <span className="w-[2px] bg-white border-r border-[#808080]" />
        <span className="w-[2px] bg-white border-r border-[#808080]" />
      </span>
      <div className="flex-1 flex flex-col border-t-2 border-l border-t-[#484848] border-l-[#404040] h-[85px] bg-white text-[10px] font-['Liberation_Mono','Noto_Sans_CJK_SC',monospace]">
        <div className="flex h-[71px] border-b-2 border-[#c8c8c8]">
          <div className="flex-1 pl-px whitespace-pre">
            {LOG.map((line) => <p key={line} className="h-[12px] leading-[12px]"><Mixed text={line} /></p>)}
          </div>
          <div className="w-[12px] flex flex-col bg-[#ebe8e3]">
            <button aria-label="Scroll up" className={`${raised} h-[12px] flex items-center justify-center`}><Arrow up /></button>
            <span className={`${raised} h-[11px] mt-auto`} />
            <button aria-label="Scroll down" className={`${raised} h-[12px] flex items-center justify-center`}><Arrow /></button>
          </div>
        </div>
        <label className="flex items-center h-[12px] pl-px whitespace-pre">
          <span className="leading-[12px]"><Mixed text="命令: " /></span>
          <input aria-label="命令" className="flex-1 h-[12px] outline-none" />
        </label>
      </div>
    </section>

    <div className="flex items-center h-[17px] pl-[5px] gap-[8px] border-t border-[#a8a49c]">
      <span>移动或拉伸对象:</span><span>STRETCH</span>
    </div>

    <footer className="flex items-center h-[20px] border-t border-white pl-[2px]">
      <button className={`${raised} flex items-center gap-px w-[34px] h-[17px] pl-px whitespace-nowrap`}><Icon name="flag" size="w-[12px] h-[12px]" />开始</button>
      <button aria-label="cloud" className="w-[31px] h-[17px] pl-[12px]"><Icon name="cloudapp" size="w-[12px] h-[12px]" /></button>
      <Task icon="outlook">收件箱 - xueweili@s...</Task>
      <Task icon="acad" active><span className="text-[11px]">AutoCAD 2007 - ...</span></Task>
      <Task icon="folder">AutoCAD 中拉伸命令...</Task>
      <span className="ml-auto mr-[40px]">www.ixx00.com</span>
      <Icon name="keyboard" />
      <span className="ml-px" /><Sep />
      <span className="flex items-center gap-[3px] ml-[4px]"><Icon name="qmark" /><Icon name="mic" /></span>
      <span className="ml-px" /><Sep />
      <Icon name="restore" size="w-[10px] h-[13px]" />
      <div className="flex items-center gap-[5px] h-[17px] pl-[3px] ml-px mr-px border border-t-[#808080] border-l-[#808080] border-r-white border-b-white">
        {['shield', 'chip', 'pal', 'plus', 'usb', 'signal', 'speaker', 'clip', 'outlook'].map((n) => <Icon key={n} name={n} size="w-[13px] h-[13px]" />)}
        <time className="ml-px">10:57</time>
        <Icon name="display" />
      </div>
    </footer>

    <Balloon />
    <Watermark />
  </div>
);

export default App;
